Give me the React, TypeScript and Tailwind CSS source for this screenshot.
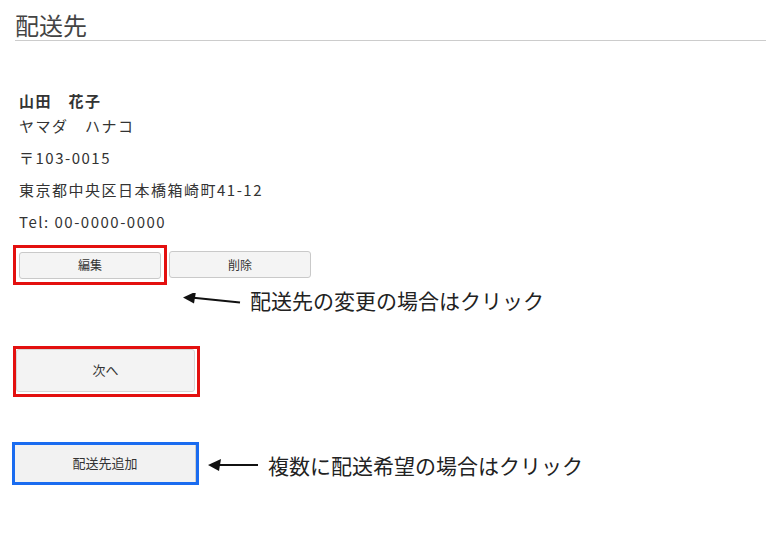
import React from "react";

const jp = "font-['Noto_Sans_CJK_JP','Noto_Sans',sans-serif]";

function ArrowLeft({ w, slant }: { w: number; slant: number }) {
  return (
    <svg width={w} height={14} viewBox={`0 0 ${w} 14`} className="block">
      <line x1={8} y1={7 - slant / 2} x2={w - 1} y2={7 + slant / 2} stroke="#111" strokeWidth={2} />
      <polygon
        points={`0,${7 - slant / 2} 13,${1 - slant / 2} 11,${13 - slant / 2}`}
        fill="#111"
      />
    </svg>
  );
}

export default function App() {
  return (
    <div className={`w-[766px] h-[533px] bg-white overflow-hidden ${jp} text-[#333]`}>
      <div className="pl-[15px] pt-[10px]">
        <h2 className="border-b border-[#cccccc] text-[24px] leading-[30px] font-normal text-[#444] font-['Noto_Sans_CJK_JP',serif]">
          配送先
        </h2>

        <div className="mt-[47px] pl-[4px] text-[15px] leading-[25px] tracking-[0.1em] text-[#333]">
          <p className="font-bold">山田　花子</p>
          <p>ヤマダ　ハナコ</p>
          <p className="mt-[7px]">〒103-0015</p>
          <p className="mt-[7px]">東京都中央区日本橋箱崎町41-12</p>
          <p className="mt-[7px]">Tel: 00-0000-0000</p>
        </div>

        <div className="mt-[11px] ml-[-2px] flex items-center">
          <div className="border-[3px] border-[#e3100f] p-[3px]">
            <button className="w-[142px] h-[27px] bg-[#f4f4f4] border border-[#c9c9c9] rounded-[3px] text-[12px] text-[#333]">
              編集
            </button>
          </div>
          <button className="ml-[2px] w-[142px] h-[27px] bg-[#f4f4f4] border border-[#c9c9c9] rounded-[3px] text-[12px] text-[#333]">
            削除
          </button>
        </div>

        <div className="mt-[1px] ml-[168px] flex items-center h-[28px]">
          <ArrowLeft w={58} slant={5} />
          <span className="ml-[9px] text-[21px] leading-[28px] text-[#222]">配送先の変更の場合はクリック</span>
        </div>

        <div className="mt-[32px] ml-[-2px] w-[187px] h-[51px] border-[3px] border-[#e3100f] pr-[2px] pb-[2px]">
          <button className="w-full h-full bg-[#f3f3f3] border border-[#d6d6d6] rounded-[3px] text-[13px] text-[#333]">
            次へ
          </button>
        </div>

        <div className="mt-[45px] flex items-center">
          <div className="ml-[-3px] w-[187px] h-[43px] border-[3px] border-[#1a6cf0]">
            <button className="w-full h-full bg-[#f2f2f2] border-r border-r-[#cfcfcf] text-[13px] text-[#333]">
              配送先追加
            </button>
          </div>
          <div className="ml-[9px] mt-[3px] flex items-center">
            <ArrowLeft w={51} slant={0} />
            <span className="ml-[9px] text-[21px] leading-[28px] text-[#222]">複数に配送希望の場合はクリック</span>
          </div>
        </div>
      </div>
    </div>
  );
}
